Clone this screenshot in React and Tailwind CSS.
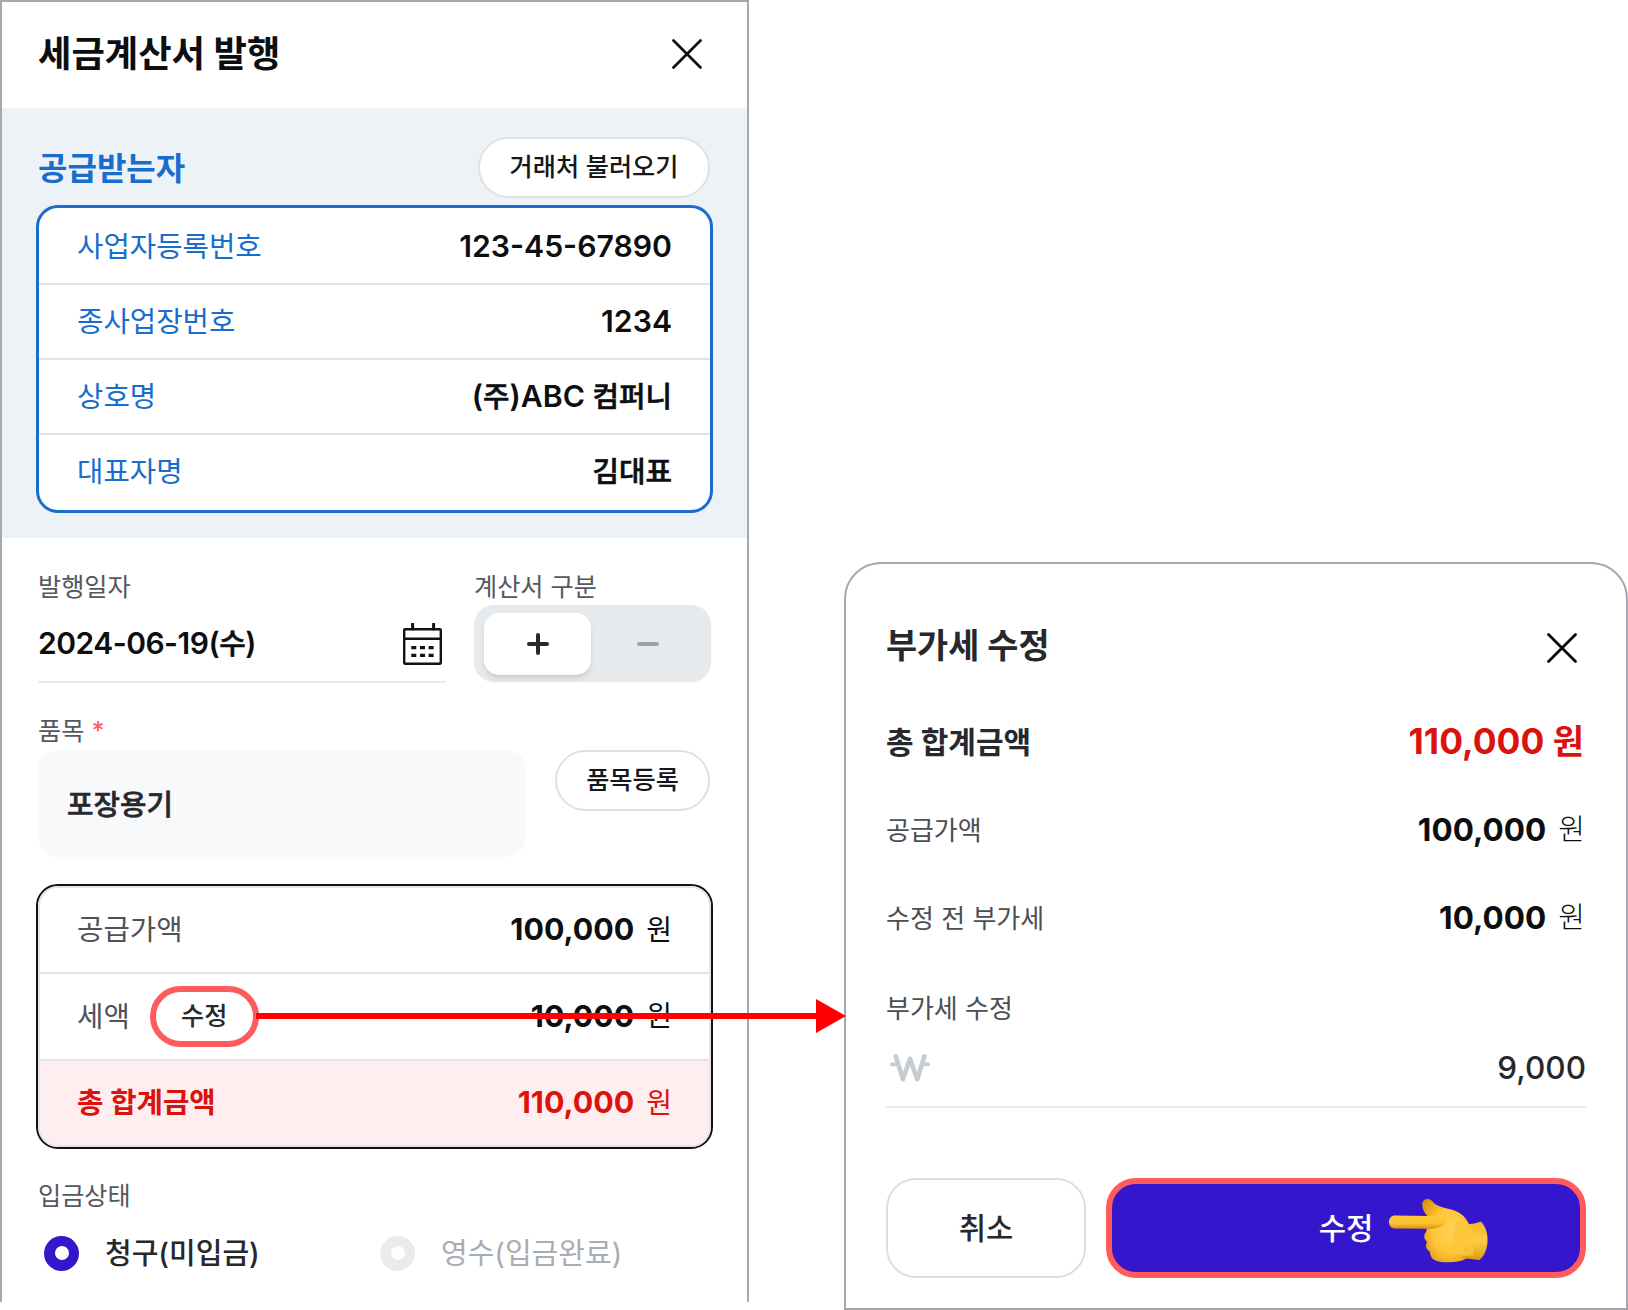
import { useState } from "react";
import clsx from "clsx";

const supplier = [
  { label: "사업자등록번호", value: "123-45-67890" },
  { label: "종사업장번호", value: "1234" },
  {
    label: "상호명",
    value: (
      <>
        (<Semi>주</Semi>)ABC <Semi>컴퍼니</Semi>
      </>
    ),
  },
  { label: "대표자명", value: <Semi>김대표</Semi> },
];

// The Korean family has no semibold cut, so thicken the medium one slightly
function Semi({ children }) {
  return <span className="text-[28.8px] font-medium [-webkit-text-stroke:0.6px_currentColor]">{children}</span>;
}

function CloseIcon({ className }) {
  return (
    <svg viewBox="0 0 30 30" className={className} fill="none" stroke="currentColor" strokeWidth="2.7" strokeLinecap="round">
      <path d="M1.5 1.5 28.5 28.5M28.5 1.5 1.5 28.5" />
    </svg>
  );
}

function CalendarIcon() {
  return (
    <svg viewBox="0 0 40 42" className="mt-0.5 h-[42px] w-10" fill="none" stroke="#111214" strokeWidth="2.4">
      <rect x="1.2" y="6.2" width="36.6" height="34.6" rx="1" />
      <path d="M1.2 15.7h36.6" />
      <path d="M9.6 1v5M30.6 1v5" strokeWidth="3" strokeLinecap="round" />
      <path d="M8.3 24.6h5M17 24.6h5M25.6 24.6h5M8.3 32.3h5M17 32.3h5M25.6 32.3h5" strokeWidth="3.2" />
    </svg>
  );
}

function WonIcon() {
  return (
    <svg viewBox="0 0 40 28" className="h-7 w-10" fill="none" stroke="#c7ccd1" strokeWidth="4.6" strokeLinecap="round" strokeLinejoin="round">
      <path d="M5.800 2.400 13 25.200 20 4.800 27.200 25.200 34.400 2.400" />
      <path d="M2 10.300h5M33 10.300h5" strokeWidth="4" />
    </svg>
  );
}

function PointingHand({ className }) {
  return (
    <svg viewBox="0 0 99 65" className={className}>
      <defs>
        <radialGradient id="palm" cx="0.55" cy="0.5" r="0.65">
          <stop offset="0" stopColor="#ffd255" />
          <stop offset="0.55" stopColor="#fdc537" />
          <stop offset="1" stopColor="#dc9410" />
        </radialGradient>
        <linearGradient id="finger" x1="0" y1="0" x2="0" y2="1">
          <stop offset="0" stopColor="#ffca3b" />
          <stop offset="0.6" stopColor="#fcc030" />
          <stop offset="1" stopColor="#d98f10" />
        </linearGradient>
        <linearGradient id="wrist" x1="0" y1="0" x2="0" y2="1">
          <stop offset="0" stopColor="#f4b526" />
          <stop offset="0.5" stopColor="#fecb42" />
          <stop offset="1" stopColor="#dd9a16" />
        </linearGradient>
      </defs>
      <path
        fill="url(#palm)"
        d="M40 20C33 13 31 4 36 1.500 39 0 42 1.500 44 4 48 9 56 9.500 64 12 73 15 76 19 80 26L84 30 84 58 78 60C73 64 62 65 52 64 45 63 41 60 41 54 37 51 36 48 38 44 35 41 34 37 37 34Z"
      />
      <path fill="url(#wrist)" d="M77 26.500C83 26 88 25 92 23.500 97 29 99 36 98.500 44 98 52 95 58 90.500 62 86 61.500 80 60 74 60.500Z" />
      <path fill="#fdc739" d="M66 24C72 22 77 25 80 27L84 30 84 57 76 58 62 54Z" opacity="0.8" />
      <path fill="url(#finger)" d="M6 17.500 38 18C44 18 52 17 58 18 62 24 52 30 42 30.800L6 30.500C2 30.500 0 27.500 0 24 0 20 2.500 17.500 6 17.500Z" />
    </svg>
  );
}

function PillButton({ children, className }) {
  return (
    <button className={clsx("flex h-[61px] items-center justify-center rounded-full border-2 border-[#e0e1e2] bg-white text-[25.2px] font-medium text-[#15171a]", className)}>
      {children}
    </button>
  );
}

function FieldLabel({ children, className }) {
  return <p className={clsx("h-[38px] text-[25.2px] leading-[38px] text-[#55585f]", className)}>{children}</p>;
}

function SummaryRow({ label, amount, className, children }) {
  return (
    <div className={clsx("flex items-center justify-between pr-[37px] pl-[37px] text-[28.7px]", className)}>
      <div className="flex items-center">
        {label}
        {children}
      </div>
      <div className="flex items-center">
        <span className="text-[30.4px] font-bold">{amount}</span>
        <span className="ml-3 text-[28px]">원</span>
      </div>
    </div>
  );
}

function ModalRow({ label, amount, className }) {
  return (
    <div className={clsx("flex items-center justify-between", className)}>
      <span className="text-[26px] text-[#4b4e55]">{label}</span>
      <div className="flex items-center pr-px text-[#0d0e10]">
        <span className="text-[31.5px] font-bold">{amount}</span>
        <span className="ml-3 text-[29px] font-light">원</span>
      </div>
    </div>
  );
}

function Radio({ checked, label, onSelect, className }) {
  return (
    <button onClick={onSelect} className={clsx("flex items-center gap-[26px]", className)}>
      <span className={clsx("flex size-[35px] items-center justify-center rounded-full", checked ? "bg-[#3516cc]" : "bg-[#ebebeb]")}>
        <span className="size-3.5 rounded-full bg-white" />
      </span>
      <span className={clsx("pt-0.5 text-[29px] leading-9", checked ? "font-medium text-[#26282c]" : "text-[#a8acb4]")}>{label}</span>
    </button>
  );
}

function InvoicePanel() {
  const [sign, setSign] = useState("+");
  const [paid, setPaid] = useState(false);

  return (
    <section className="flex h-[1302px] w-[749px] flex-col border-2 border-b-0 border-[#a5a9af] bg-white">
      <header className="flex h-[106px] items-center justify-between pr-[45px] pb-[3px] pl-[36px]">
        <h1 className="pt-0.5 text-[36.3px] font-bold text-[#0d0e10]">세금계산서 발행</h1>
        <CloseIcon className="size-[30px] text-[#0d0e10]" />
      </header>

      <div className="h-[430px] bg-[#edf2f7] pt-[29px]">
        <div className="flex items-center justify-between pr-[37px] pl-[36px]">
          <h2 className="pt-0.5 text-[32px] font-bold text-[#196dcc]">공급받는자</h2>
          <PillButton className="w-[232px]">거래처 불러오기</PillButton>
        </div>
        <dl className="mt-[7px] ml-[34px] w-[677px] overflow-hidden rounded-[22px] border-3 border-[#196dcc] bg-white pt-0.5">
          {supplier.map((row) => (
            <div key={row.label} className="flex h-[75px] items-center justify-between border-b-2 border-[#e2e3e4] pr-[38px] pl-[38px] last:border-transparent">
              <dt className="text-[28.7px] text-[#196dcc]">{row.label}</dt>
              <dd className="text-[30.2px] font-semibold text-[#0d0e10]">{row.value}</dd>
            </div>
          ))}
        </dl>
      </div>

      <div className="flex pt-[29px] pl-[36px]">
        <div className="w-[408px]">
          <FieldLabel className="pt-px">발행일자</FieldLabel>
          <div className="flex h-[78px] items-center justify-between border-b-2 border-[#e8ecee] pr-[3px]">
            <span className="text-[30px] font-semibold tracking-[-0.5px] text-[#0d0e10]">
              2024-06-19(<Semi>수</Semi>)
            </span>
            <CalendarIcon />
          </div>
        </div>
        <div className="ml-7">
          <FieldLabel className="pt-px">계산서 구분</FieldLabel>
          <div className="flex h-[77px] w-[237px] items-center gap-[3px] rounded-[20px] bg-[#e6eaed] px-[10px]">
            {["+", "-"].map((s) => (
              <button
                key={s}
                onClick={() => setSign(s)}
                className={clsx("flex h-[62px] w-[107px] items-center justify-center rounded-[15px]", sign === s ? "bg-white text-[#26282c] shadow-md" : "text-[#9fa1a9]")}
              >
                <svg viewBox="0 0 22 22" className="size-[22px]" fill="none" stroke="currentColor" strokeWidth="4" strokeLinecap="round">
                  <path d={s === "+" ? "M2 11h18M11 2v18" : "M2 11h18"} />
                </svg>
              </button>
            ))}
          </div>
        </div>
      </div>

      <div className="mt-[29px] flex justify-between pr-[37px] pl-[36px]">
        <div>
          <FieldLabel>
            품목 <span className="font-medium text-[#fa5f5c]">*</span>
          </FieldLabel>
          <div className="flex h-[107px] w-[488px] items-center rounded-[20px] bg-[#f8f9fb] pt-0.5 pl-[29px] text-[#26282c]">
            <Semi>포장용기</Semi>
          </div>
        </div>
        <PillButton className="mt-[38px] w-[155px]">품목등록</PillButton>
      </div>

      <div className="mt-[27px] ml-[34px] w-[677px] overflow-hidden rounded-[22px] border-2 border-[#111214]">
        <div className="rounded-[20px] border-2 border-[#e4e5e5]">
          <SummaryRow className="h-[86px] border-b-2 border-[#e2e4e4] text-[#0d0e10]" label={<span className="text-[#4f525a]">공급가액</span>} amount="100,000" />
          <SummaryRow className="h-[87px] border-b-2 border-[#e2e4e4] text-[#0d0e10]" label={<span className="text-[#4f525a]">세액</span>} amount="10,000">
            <button className="ml-5 flex h-[61px] w-[109px] items-center justify-center rounded-full border-6 border-[#fe5b5d] text-[25.2px] font-medium text-[#26282c]">수정</button>
          </SummaryRow>
          <SummaryRow className="h-[84px] rounded-b-[18px] bg-[#ffeef0] text-[#dc120d]" label={<span className="font-bold">총 합계금액</span>} amount="110,000" />
        </div>
      </div>

      <div className="mt-[28px] pl-[36px]">
        <FieldLabel>입금상태</FieldLabel>
        <div className="mt-[19px] flex pl-1.5">
          <Radio className="w-[336px]" checked={!paid} onSelect={() => setPaid(false)} label="청구(미입금)" />
          <Radio checked={paid} onSelect={() => setPaid(true)} label="영수(입금완료)" />
        </div>
      </div>
    </section>
  );
}

function VatModal() {
  return (
    <section className="h-[748px] w-[784px] rounded-t-[37px] border-2 border-[#a5a9af] bg-white px-10 pt-[56px]">
      <header className="flex h-[52px] items-center justify-between pr-[9px]">
        <h2 className="text-[33.8px] font-bold text-[#26282c]">부가세 수정</h2>
        <CloseIcon className="mt-1 size-[30px] text-black" />
      </header>

      <div className="mt-[44px] flex h-[52px] items-center justify-between pr-0.5">
        <span className="text-[30px] font-bold text-[#26282c]">총 합계금액</span>
        <span className="text-[35.4px] font-bold text-[#dc120d]">
          110,000 <span className="text-[34px]">원</span>
        </span>
      </div>
      <ModalRow className="mt-[36px] h-[52px]" label="공급가액" amount="100,000" />
      <ModalRow className="mt-[36px] h-[52px]" label="수정 전 부가세" amount="10,000" />

      <p className="mt-[45px] h-[40px] text-[26px] leading-10 text-[#4b4e55]">부가세 수정</p>
      <div className="flex h-[79px] items-center justify-between border-b-2 border-[#e8ecf0] pl-1">
        <WonIcon />
        <span className="text-[31.5px] font-medium text-[#26282c]">9,000</span>
      </div>

      <div className="mt-[70px] flex gap-5 text-[29.7px] font-medium">
        <button className="h-[100px] w-[200px] rounded-[30px] border-2 border-[#dddedf] text-[#26282c]">취소</button>
        <button className="relative h-[100px] w-[480px] rounded-[30px] border-6 border-[#ff5b5b] bg-[#3516cc] text-white">
          수정
          <PointingHand className="absolute top-[14px] left-[277px] h-[65px] w-[99px]" />
        </button>
      </div>
    </section>
  );
}

export default function App() {
  return (
    <main className="relative flex h-[1310px] w-[1628px] items-start justify-between overflow-hidden bg-white font-['Inter','Noto_Sans_CJK_KR',sans-serif]">
      <InvoicePanel />
      <div className="self-end">
        <VatModal />
      </div>
      {/* arrow from the tax edit button to the dialog */}
      <svg viewBox="0 0 590 34" className="absolute top-[999px] left-[256px] h-[34px] w-[590px]" fill="#ff0000">
        <path d="M0 14H560V0L590 17 560 34V20H0Z" />
      </svg>
    </main>
  );
}
